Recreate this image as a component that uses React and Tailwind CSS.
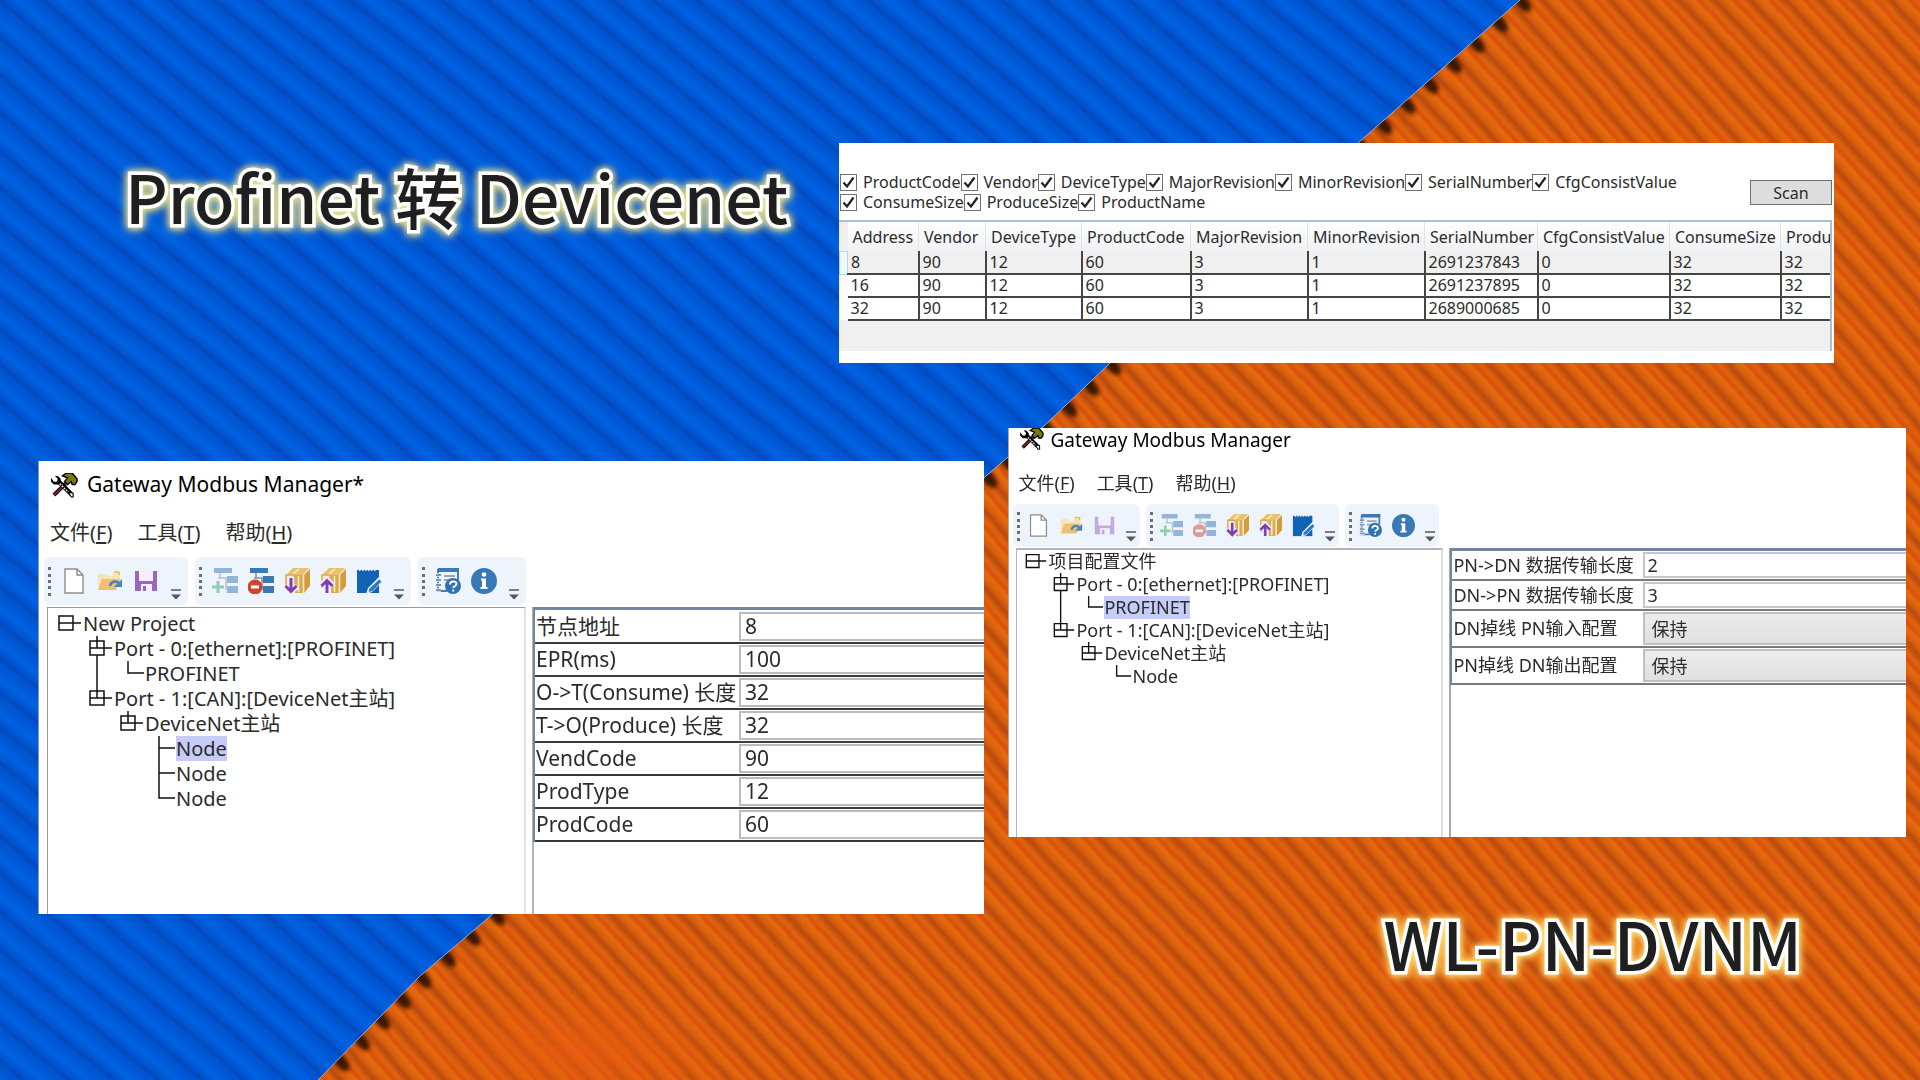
import React from "react";
import clsx from "clsx";

const columns = [
  { title: "Address", width: "w-[71px]" },
  { title: "Vendor", width: "w-[67px]" },
  { title: "DeviceType", width: "w-[96px]" },
  { title: "ProductCode", width: "w-[109px]" },
  { title: "MajorRevision", width: "w-[117px]" },
  { title: "MinorRevision", width: "w-[117px]" },
  { title: "SerialNumber", width: "w-[113px]" },
  { title: "CfgConsistValue", width: "w-[132px]" },
  { title: "ConsumeSize", width: "w-[111px]" },
  { title: "Produ", width: "" },
];

const devices = [
  ["8", "90", "12", "60", "3", "1", "2691237843", "0", "32", "32"],
  ["16", "90", "12", "60", "3", "1", "2691237895", "0", "32", "32"],
  ["32", "90", "12", "60", "3", "1", "2689000685", "0", "32", "32"],
];

const filterRows = [
  [
    "ProductCode",
    "Vendor",
    "DeviceType",
    "MajorRevision",
    "MinorRevision",
    "SerialNumber",
    "CfgConsistValue",
  ],
  ["ConsumeSize", "ProduceSize", "ProductName"],
];

// guides: one entry per indent level, the last one joins the label
const projectTree = [
  { label: "New Project", guides: ["root"] },
  { label: "Port - 0:[ethernet]:[PROFINET]", guides: ["blank", "boxMid"] },
  { label: "PROFINET", guides: ["blank", "pass", "elbow"] },
  { label: "Port - 1:[CAN]:[DeviceNet主站]", guides: ["blank", "boxLast"] },
  { label: "DeviceNet主站", guides: ["blank", "blank", "boxLast"] },
  { label: "Node", guides: ["blank", "blank", "blank", "tee"], selected: true },
  { label: "Node", guides: ["blank", "blank", "blank", "tee"] },
  { label: "Node", guides: ["blank", "blank", "blank", "elbow"] },
];

const configTree = [
  { label: "项目配置文件", guides: ["root"] },
  { label: "Port - 0:[ethernet]:[PROFINET]", guides: ["blank", "boxMid"] },
  { label: "PROFINET", guides: ["blank", "pass", "elbow"], selected: true },
  { label: "Port - 1:[CAN]:[DeviceNet主站]", guides: ["blank", "boxLast"] },
  { label: "DeviceNet主站", guides: ["blank", "blank", "boxLast"] },
  { label: "Node", guides: ["blank", "blank", "blank", "elbow"] },
];

const nodeFields = [
  { id: "node-address", label: "节点地址", value: "8" },
  { id: "node-epr", label: "EPR(ms)", value: "100" },
  { id: "node-consume", label: "O->T(Consume) 长度", value: "32" },
  { id: "node-produce", label: "T->O(Produce) 长度", value: "32" },
  { id: "node-vend", label: "VendCode", value: "90" },
  { id: "node-type", label: "ProdType", value: "12" },
  { id: "node-code", label: "ProdCode", value: "60" },
];

const profinetFields = [
  { id: "pn-dn", label: "PN->DN 数据传输长度", value: "2" },
  { id: "dn-pn", label: "DN->PN 数据传输长度", value: "3" },
  { id: "dn-lost", label: "DN掉线 PN输入配置", value: "保持", select: true },
  { id: "pn-lost", label: "PN掉线 DN输出配置", value: "保持", select: true },
];

const menus = [
  ["文件", "F"],
  ["工具", "T"],
  ["帮助", "H"],
];

/* ---------- background ---------- */

const EDGE = [
  [1520, 0],
  [1358, 143],
  [1110, 363],
  [1044, 426],
  [986, 476],
  [740, 698],
  [494, 913],
  [420, 976],
  [318, 1080],
];

// evenly spaced points along the torn edge
const notches = [];
for (let i = 0; i < EDGE.length - 1; i++) {
  const [x1, y1] = EDGE[i];
  const [x2, y2] = EDGE[i + 1];
  const n = Math.max(1, Math.round((y2 - y1) / 20));
  for (let k = 0; k < n; k++) {
    notches.push([x1 + ((x2 - x1) * k) / n, y1 + ((y2 - y1) * k) / n]);
  }
}

const edgePoints = EDGE.map((p) => p.join(",")).join(" ");

const Backdrop = () => (
  <svg
    className="absolute inset-0 h-full w-full"
    viewBox="0 0 1920 1080"
    preserveAspectRatio="none"
    aria-hidden="true"
  >
    <defs>
      <linearGradient id="blueRib">
        <stop offset="0" stopColor="#0049bd" />
        <stop offset="0.12" stopColor="#0054d0" />
        <stop offset="0.4" stopColor="#0062e0" />
        <stop offset="0.6" stopColor="#005bd9" />
        <stop offset="0.88" stopColor="#0053cf" />
        <stop offset="1" stopColor="#0049bd" />
      </linearGradient>
      <linearGradient id="orangeRib">
        <stop offset="0" stopColor="#b94a08" />
        <stop offset="0.2" stopColor="#d95f08" />
        <stop offset="0.42" stopColor="#e66b07" />
        <stop offset="0.56" stopColor="#d84f08" />
        <stop offset="0.74" stopColor="#e06407" />
        <stop offset="0.9" stopColor="#c95307" />
        <stop offset="1" stopColor="#b94a08" />
      </linearGradient>
      <pattern
        id="blue"
        width="28"
        height="28"
        patternUnits="userSpaceOnUse"
        patternTransform="rotate(-50)"
      >
        <rect width="28" height="28" fill="url(#blueRib)" />
      </pattern>
      <pattern
        id="orange"
        width="26"
        height="26"
        patternUnits="userSpaceOnUse"
        patternTransform="rotate(-42)"
      >
        <rect width="26" height="26" fill="url(#orangeRib)" />
      </pattern>
      <filter id="soft">
        <feGaussianBlur stdDeviation="2" />
      </filter>
      <filter id="bend" x="0" y="0" width="1" height="1">
        <feTurbulence type="fractalNoise" baseFrequency="0.003" numOctaves="1" seed="4" />
        <feDisplacementMap in="SourceGraphic" scale="24" xChannelSelector="R" yChannelSelector="G" />
      </filter>
      <clipPath id="blueSide">
        <polygon points={`0,0 ${edgePoints} 0,1080`} />
      </clipPath>
      <radialGradient id="glow">
        <stop offset="0" stopColor="#ea5a10" stopOpacity="0.7" />
        <stop offset="1" stopColor="#ea5a10" stopOpacity="0" />
      </radialGradient>
    </defs>
    <rect x="-60" y="-60" width="2040" height="1200" fill="url(#orange)" filter="url(#bend)" />
    <ellipse cx="580" cy="1050" rx="170" ry="70" fill="url(#glow)" />
    <g filter="url(#soft)" fill="#3a1204">
      {notches.map(([x, y], i) => (
        <ellipse
          key={i}
          cx={x + 2}
          cy={y + 2}
          rx="12"
          ry="6"
          transform={`rotate(50 ${x + 2} ${y + 2})`}
        />
      ))}
    </g>
    <g clipPath="url(#blueSide)">
      <rect x="-60" y="-60" width="2040" height="1200" fill="url(#blue)" filter="url(#bend)" />
    </g>
    <polyline points={edgePoints} fill="none" stroke="#8fb4dc" strokeWidth="1" />
  </svg>
);

/* ---------- icons ---------- */

const ToolsIcon = ({ className }) => (
  <svg viewBox="0 0 28 26" className={className} aria-hidden="true">
    <path d="M15 11 3 23" stroke="#000" strokeWidth="4" />
    <path d="M15 11 3 23" stroke="#8b2028" strokeWidth="2" />
    <path
      d="M12 3 16 0h6l5 6v3l-2 3h-3l-1-3-4 3-3-3 3-4z"
      fill="#767a10"
      stroke="#000"
      strokeWidth="1.5"
    />
    <path d="m8 9 13 13" stroke="#000" strokeWidth="4.5" />
    <path d="m9 11 11 11" stroke="#e8e8e8" strokeWidth="1.5" strokeDasharray="2 1" />
    <path d="M0 5v4l3 3h5l2-2V6L7 3H4l3 3-1 3H3z" fill="#000" />
    <path d="m18 20 3 5h2v-4z" fill="#fff" stroke="#000" strokeWidth="1.2" />
  </svg>
);

const NewIcon = ({ className }) => (
  <svg viewBox="0 0 26 26" className={className} aria-hidden="true">
    <path d="M4 1h12l6 6v18H4z" fill="#fff" stroke="#8d8d8d" strokeWidth="1.4" />
    <path d="M16 1v6h6" fill="none" stroke="#8d8d8d" strokeWidth="1.4" />
  </svg>
);

const OpenIcon = ({ className }) => (
  <svg viewBox="0 0 26 26" className={className} aria-hidden="true">
    <path d="M1 6h8l2 2h5V4h7v14H1z" fill="#f7e3b8" />
    <path d="M17 4h5v3" fill="none" stroke="#e3b96a" strokeWidth="1.5" />
    <path d="M5 11h18l-4 11H1z" fill="#efc070" />
    <path
      d="M13 18c1-5 7-6 9-2"
      fill="none"
      stroke="#4a86bd"
      strokeWidth="2.6"
    />
    <path d="M25 11v8h-8z" fill="#4a86bd" />
  </svg>
);

const SaveIcon = ({ className }) => (
  <svg viewBox="0 0 26 26" className={className} aria-hidden="true">
    <path d="M2 3h22v20H2z" fill="#9a66bf" />
    <path d="M6 2h14v11H6z" fill="#f3f0fb" />
    <path d="M8 16h11v8H8z" fill="#f3f0fb" />
    <path d="M10 18h3v5h-3z" fill="#9a66bf" />
  </svg>
);

const TreeBars = () => (
  <>
    <path d="M2 0h18v5H2zM15 8h11v7H15zM15 18h11v7H15z" fill="#3c78b4" />
    <path d="M8 5v5h6v12M8 10H6" fill="none" stroke="#8a8f96" strokeWidth="1.6" />
  </>
);

const AddNodeIcon = ({ className }) => (
  <svg viewBox="0 0 26 26" className={className} aria-hidden="true">
    <g opacity="0.5">
      <TreeBars />
    </g>
    <path d="M6 13v12M0 19h12" stroke="#8fcdb2" strokeWidth="3" />
  </svg>
);

const RemoveNodeIcon = ({ className }) => (
  <svg viewBox="0 0 26 26" className={className} aria-hidden="true">
    <TreeBars />
    <circle cx="7" cy="19" r="7.5" fill="#cf4530" />
    <path d="M3 17.5h8v3H3z" fill="#fff" />
  </svg>
);

const Box = () => (
  <>
    <path d="M2 7 9 0h16l-6 7z" fill="#e8c271" />
    <path d="M2 7h8v12H2z" fill="#fbeccb" stroke="#dba94b" strokeWidth="1.6" />
    <path d="M11 7h8v18h-8z" fill="#dcaa4e" />
    <path d="m20 7 6-6v17l-6 7z" fill="#d29c3d" />
    <path d="m9 6 6-5M19.5 7v18M14.5 8v16" stroke="#fbeccb" strokeWidth="1.6" />
  </>
);

const DownloadIcon = ({ className }) => (
  <svg viewBox="0 0 26 26" className={className} aria-hidden="true">
    <Box />
    <path d="M7 9v13M1 18l6 6 6-6" fill="none" stroke="#f2effb" strokeWidth="6" />
    <path d="M7 10v13M1.5 18 7 23.5l5.5-5.5" fill="none" stroke="#7f3fb0" strokeWidth="3" />
  </svg>
);

const UploadIcon = ({ className }) => (
  <svg viewBox="0 0 26 26" className={className} aria-hidden="true">
    <Box />
    <path d="M7 13v12M1 18l6-6 6 6" fill="none" stroke="#f2effb" strokeWidth="6" />
    <path d="M7 12v13M1.5 18 7 12.5l5.5 5.5" fill="none" stroke="#7f3fb0" strokeWidth="3" />
  </svg>
);

const NotepadIcon = ({ className }) => (
  <svg viewBox="0 0 26 26" className={className} aria-hidden="true">
    <path d="M1 2h22v23H1z" fill="#1163b8" />
    <path d="M3 1.5h18" stroke="#edf4fc" strokeWidth="3" strokeDasharray="1.5 1.5" />
    <path d="m10 26 2-6L23 9l4 4-11 11z" fill="#edf4fc" />
    <path d="m12.5 24 1-3.5L23 11.5l2.5 2-9 9.5z" fill="#2c78c4" />
  </svg>
);

const HelpIcon = ({ className }) => (
  <svg viewBox="0 0 26 26" className={className} aria-hidden="true">
    <path d="M3 1h20v11M3 1v22h9" fill="none" stroke="#4a7fb5" strokeWidth="2" />
    <path d="M3 0h21v4H3z" fill="#3c78b4" />
    <path d="M0 7h6M0 12h6M0 17h6M0 22h6" stroke="#edf4fc" strokeWidth="3.5" />
    <path d="M1 7h5M1 12h5M1 17h5M1 22h5" stroke="#7d93ab" strokeWidth="2" />
    <path d="M9 8h11M9 12h5" stroke="#9aa5b1" strokeWidth="2" />
    <circle cx="18" cy="18" r="8" fill="#2f73b5" />
    <path
      d="M15 16.5c0-4 6.5-4 6.5-.5 0 2.2-3.2 2-3.2 4M18.2 21.5v2"
      fill="none"
      stroke="#fff"
      strokeWidth="2"
    />
  </svg>
);

const InfoIcon = ({ className }) => (
  <svg viewBox="0 0 26 26" className={className} aria-hidden="true">
    <circle cx="13" cy="13" r="13" fill="#3a78b5" />
    <circle cx="13" cy="6.5" r="2.3" fill="#fff" />
    <path d="M10 10.5h5V19h1.5v2h-7v-2H11v-6.5h-1z" fill="#fff" />
  </svg>
);

const Grip = () => (
  <svg viewBox="0 0 4 32" className="ml-1 h-8 w-1 shrink-0" aria-hidden="true">
    <path
      d="M0 2h3v3H0zM0 9h3v3H0zM0 15h3v3H0zM0 21h3v3H0zM0 28h3v3H0z"
      fill="#6b6f75"
    />
  </svg>
);

const Overflow = () => (
  <svg viewBox="0 0 12 12" className="h-3 w-3" aria-hidden="true">
    <path d="M1 1h10" stroke="#55585c" strokeWidth="1.5" />
    <path d="M1 5.5h10L6 10.5z" fill="#55585c" />
  </svg>
);

const toolGroups = [
  [
    { name: "New", Icon: NewIcon },
    { name: "Open", Icon: OpenIcon },
    { name: "Save", Icon: SaveIcon },
  ],
  [
    { name: "Add node", Icon: AddNodeIcon },
    { name: "Remove node", Icon: RemoveNodeIcon },
    { name: "Download", Icon: DownloadIcon },
    { name: "Upload", Icon: UploadIcon },
    { name: "Notes", Icon: NotepadIcon },
  ],
  [
    { name: "Help", Icon: HelpIcon },
    { name: "About", Icon: InfoIcon },
  ],
];

/* ---------- window parts ---------- */

const MenuBar = ({ className }) => (
  <nav className={clsx("flex items-center", className)}>
    {menus.map(([text, key]) => (
      <button key={key} type="button">
        {text}(<u className="underline-offset-2">{key}</u>)
      </button>
    ))}
  </nav>
);

const Toolbar = ({ small, disabled = [] }) => (
  <div className={clsx("flex", small ? "h-[43px] gap-[6px] pl-1" : "h-12 gap-[7px] pl-[5px]")}>
    {toolGroups.map((group, i) => (
      <div key={i} className="flex items-center rounded-md bg-[#edf4fc]">
        <Grip />
        <div className={clsx("flex", small ? "pl-px" : "pl-1")}>
          {group.map(({ name, Icon }) => (
            <button
              key={name}
              type="button"
              aria-label={name}
              className={clsx(
                "flex justify-center",
                small ? "w-[33px]" : "w-9",
                disabled.includes(name) && "opacity-50"
              )}
            >
              <Icon className={small ? "h-[23px] w-[23px]" : "h-[26px] w-[26px]"} />
            </button>
          ))}
        </div>
        <button
          type="button"
          aria-label="More"
          className={clsx(
            "flex items-end justify-center self-stretch pb-1",
            small ? "w-[19px]" : "w-6"
          )}
        >
          <Overflow />
        </button>
      </div>
    ))}
  </div>
);

const guidePaths = {
  root: "M7 5h14v14H7zM7 12h22",
  boxMid: "M7 5h14v14H7zM7 12h22M14 0v12M14 19v6",
  boxLast: "M7 5h14v14H7zM7 12h22M14 0v12",
  pass: "M14 0v25",
  tee: "M14 0v25M14 12h16",
  elbow: "M14 0v12h16",
  blank: "",
};

const Tree = ({ items, small, className }) => (
  <ul className={className}>
    {items.map((item, i) => (
      <li key={i} className={clsx("flex", small ? "h-[23px]" : "h-[25px]")}>
        {item.guides.map((guide, level) => (
          <svg
            key={level}
            viewBox="0 0 31 25"
            preserveAspectRatio="none"
            className={clsx("h-full shrink-0", small ? "w-7" : "w-[31px]")}
            aria-hidden="true"
          >
            <path d={guidePaths[guide]} fill="none" stroke="#111" strokeWidth="1.5" />
          </svg>
        ))}
        <span
          className={clsx(
            "whitespace-nowrap",
            small ? "leading-[23px]" : "leading-[25px]",
            item.selected && "bg-[#c6cbf8]"
          )}
        >
          {item.label}
        </span>
      </li>
    ))}
  </ul>
);

/* ---------- panels ---------- */

const ScanPanel = () => (
  <section className="min-w-0 flex-[995] bg-white pb-3 pt-[29px] text-base text-[#2b2b2b]">
    <div className="flex items-start justify-between pr-[2px]">
      <div>
        {filterRows.map((row, i) => (
          <div key={i} className="flex h-5 items-center pl-px">
            {row.map((name) => (
              <label key={name} className="flex items-center gap-[6px] whitespace-nowrap leading-5">
                <span className="relative flex h-[17px] w-[17px]">
                  <input
                    type="checkbox"
                    defaultChecked
                    className="h-[17px] w-[17px] appearance-none border border-[#707070] bg-white"
                  />
                  <svg
                    viewBox="0 0 17 17"
                    className="pointer-events-none absolute inset-0"
                    aria-hidden="true"
                  >
                    <path d="m3.5 8.5 3.5 4 6.5-9" fill="none" stroke="#222" strokeWidth="2.2" />
                  </svg>
                </span>
                {name}
              </label>
            ))}
          </div>
        ))}
      </div>
      <button
        type="button"
        className="mt-2 h-[25px] w-[82px] border border-[#707070] bg-[#dddddd] leading-[22px]"
      >
        Scan
      </button>
    </div>

    <div className="mr-[2px] mt-2 h-[131px] overflow-hidden border-r-2 border-t-2 border-[#a9c0d8] bg-[#f0f0f0]">
      <table className="w-full table-fixed border-collapse">
        <thead>
          <tr className="h-[29px] bg-gradient-to-b from-white to-[#eff1f4]">
            <th className="w-2 bg-[#f0f0f0]" />
            {columns.map((col) => (
              <th
                key={col.title}
                className={clsx(
                  "border-r border-[#e0e3e8] pl-[5px] text-left font-normal leading-7 last:border-r-0",
                  col.width
                )}
              >
                {col.title}
              </th>
            ))}
          </tr>
        </thead>
        <tbody>
          {devices.map((row, i) => (
            <tr key={row[0]} className={clsx("h-[23px]", i === 0 ? "bg-[#f0f0f0]" : "bg-white")}>
              <td className={i === 0 ? "border border-[#a8dcf4] bg-[#f0f8fd]" : "bg-[#fafafa]"} />
              {row.map((cell, c) => (
                <td
                  key={c}
                  className="border-b-2 border-r-2 border-[#454545] pl-[3px] leading-[21px] last:border-r-0"
                >
                  {cell}
                </td>
              ))}
            </tr>
          ))}
        </tbody>
      </table>
    </div>
  </section>
);

const NodeWindow = () => (
  <section className="mt-[33px] flex min-h-[453px] min-w-0 flex-[946] flex-col overflow-hidden border-l border-[#8b99ad] bg-white text-xl text-[#2b2b2b]">
    <header className="flex h-12 items-center gap-[9px] pl-3">
      <ToolsIcon className="h-[25px] w-[27px]" />
      <h2 className="whitespace-nowrap text-[21px] text-black">Gateway Modbus Manager*</h2>
    </header>
    <MenuBar className="h-12 gap-[25px] pl-[11px]" />
    <Toolbar />
    <div className="mt-[2px] flex flex-1">
      <Tree
        items={projectTree}
        className="ml-2 w-[479px] shrink-0 border-l border-r-2 border-t border-[#9a9a9a] border-r-[#e4e4e4] pl-1 pt-[3px]"
      />
      <div className="ml-[6px] flex-1 border-l-2 border-[#b4b4b4]">
        <form className="-ml-px border-l-2 border-t-[3px] border-[#71869f] pt-px text-[21px]">
          {nodeFields.map((field) => (
            <div key={field.id} className="flex h-[33px] border-b-2 border-[#3c3c3c]">
              <label htmlFor={field.id} className="w-[204px] shrink-0 whitespace-nowrap pl-px leading-[31px]">
                {field.label}
              </label>
              <input
                id={field.id}
                defaultValue={field.value}
                className="my-px min-w-0 flex-1 border-2 border-r-0 border-[#b9bbc0] pl-1"
              />
            </div>
          ))}
        </form>
      </div>
    </div>
  </section>
);

const ProfinetWindow = () => (
  <section className="flex min-h-[409px] flex-col overflow-hidden border-l border-[#b5a9a0] bg-white text-lg text-[#2b2b2b]">
    <header className="flex h-[34px] gap-[6px] pl-[11px]">
      <ToolsIcon className="h-[22px] w-6" />
      <h2 className="whitespace-nowrap text-[19px] leading-6 text-black">Gateway Modbus Manager</h2>
    </header>
    <MenuBar className="h-[42px] gap-[22px] pl-[9px]" />
    <Toolbar small disabled={["Save", "Remove node"]} />
    <div className="mt-px flex flex-1">
      <Tree
        small
        items={configTree}
        className="ml-[7px] w-[427px] shrink-0 border-l border-r-2 border-t-2 border-[#b4b4b4] border-r-[#dedede] pl-[3px]"
      />
      <div className="ml-[6px] flex-1 border-l-2 border-[#a8a8a8]">
        <form className="-ml-px border-l-2 border-t-[3px] border-[#71869f]">
          {profinetFields.map((field) => (
            <div
              key={field.id}
              className={clsx(
                "flex items-stretch border-b-2 border-[#7a7a7a]",
                field.select ? "h-[37px]" : "h-[30px]"
              )}
            >
              <label
                htmlFor={field.id}
                className={clsx(
                  "w-[191px] shrink-0 whitespace-nowrap pl-px",
                  field.select ? "leading-[35px]" : "leading-[28px]"
                )}
              >
                {field.label}
              </label>
              {field.select ? (
                <select
                  id={field.id}
                  className="my-px min-w-0 flex-1 appearance-none border-2 border-r-0 border-[#c0c0c0] bg-gradient-to-b from-[#ececec] to-[#e0e0e0] pl-[6px]"
                >
                  <option>{field.value}</option>
                </select>
              ) : (
                <input
                  id={field.id}
                  defaultValue={field.value}
                  className="my-px min-w-0 flex-1 border-2 border-r-0 border-[#c4c6ca] pl-[2px]"
                />
              )}
            </div>
          ))}
        </form>
      </div>
    </div>
  </section>
);

const bannerText =
  "whitespace-nowrap font-['Noto_Sans_CJK_SC',sans-serif] text-[66px] font-medium leading-[80px] text-[#1f1f1f] [paint-order:stroke_fill] [-webkit-text-stroke:7px_#fff]";

const App = () => {
  return (
    <main className="relative min-h-screen overflow-hidden bg-[#d95f08] font-['Noto_Sans','Noto_Sans_CJK_SC',sans-serif]">
      <Backdrop />
      <div className="relative pt-[143px]">
        <div className="flex items-start">
          <div className="min-w-0 flex-[839]">
            <h1
              className={clsx(
                bannerText,
                "pl-[125px] pt-3 [filter:drop-shadow(0_0_3px_#eadf8c)_drop-shadow(0_1px_4px_#d8d68c)]"
              )}
            >
              Profinet 转 Devicenet
            </h1>
          </div>
          <ScanPanel />
          <div className="flex-[86]" />
        </div>
        <div className="mt-[65px] flex items-start">
          <div className="flex-[38]" />
          <NodeWindow />
          <div className="flex-[24]" />
          <div className="min-w-0 flex-[898]">
            <ProfinetWindow />
            <p
              className={clsx(
                bannerText,
                "pl-[375px] pt-[65px] [filter:drop-shadow(0_0_3px_#ffe27a)_drop-shadow(0_1px_4px_#ffd060)]"
              )}
            >
              WL-PN-DVNM
            </p>
          </div>
          <div className="flex-[14]" />
        </div>
      </div>
    </main>
  );
};

export default App;
